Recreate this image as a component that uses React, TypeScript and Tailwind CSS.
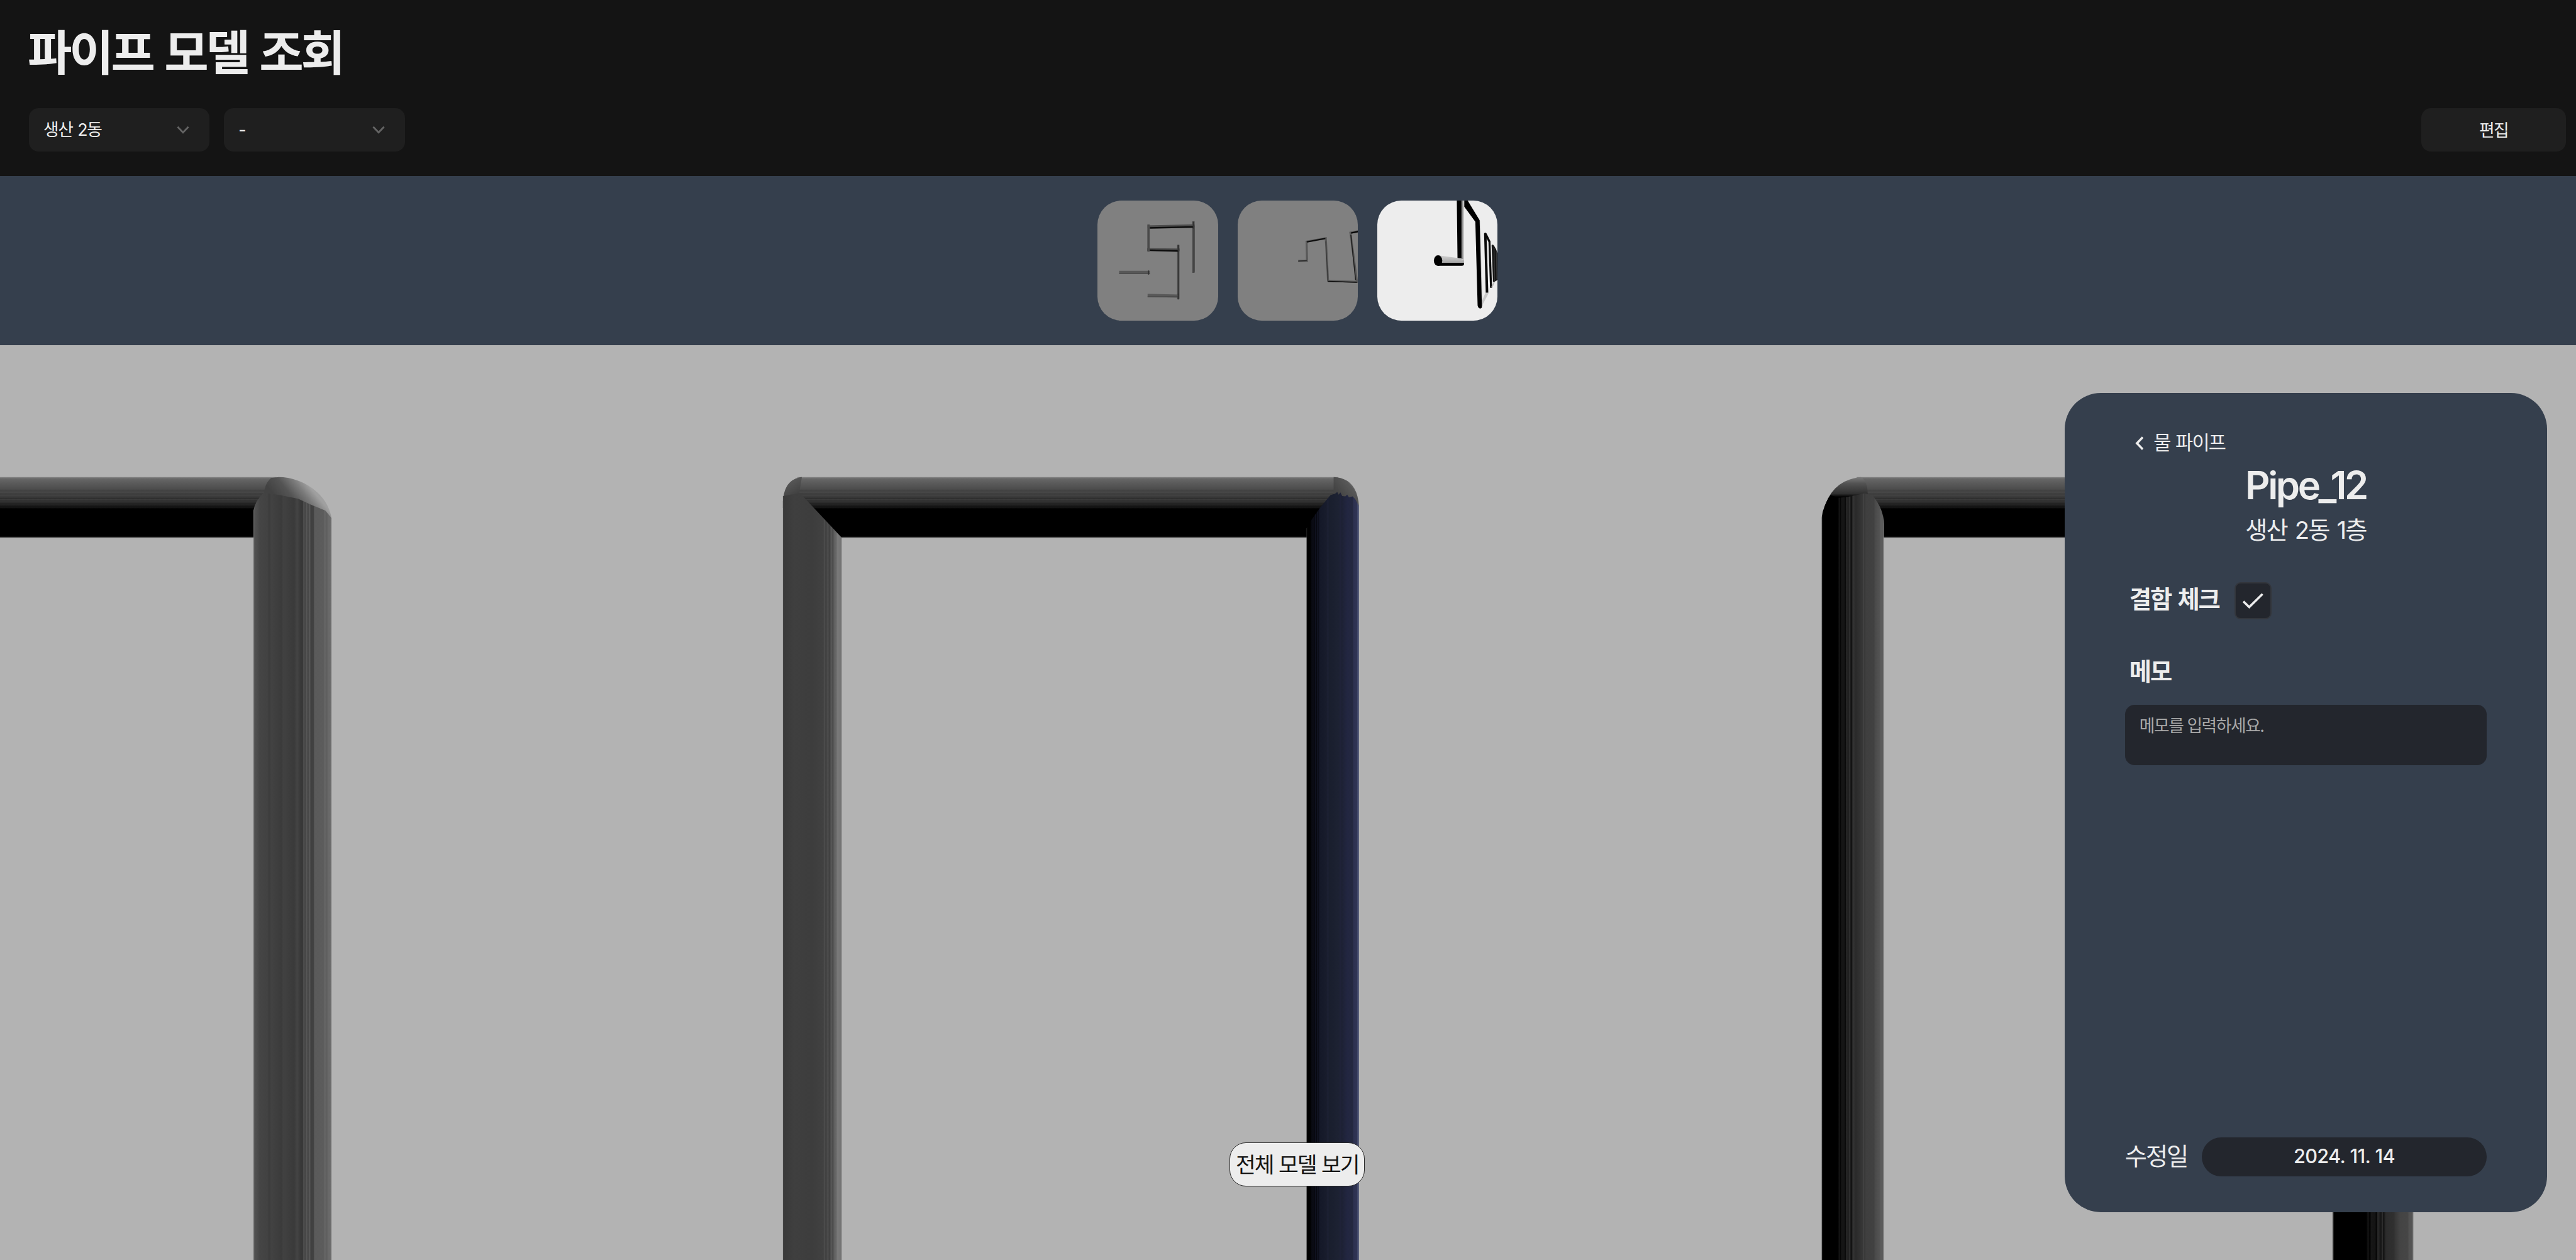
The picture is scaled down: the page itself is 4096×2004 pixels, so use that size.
import React from "react";

function ChevronDown() {
  return (
    <svg viewBox="0 0 28 18" className="h-[13px] w-[20px] shrink-0" fill="none" stroke="#646464" strokeWidth="4">
      <path d="M2 2.5 14 15 26 2.5" />
    </svg>
  );
}

function Select({ label }: { label: string }) {
  return (
    <div className="flex h-[69px] w-[287.3px] items-center justify-between rounded-[15.3px] bg-[#1f1f1f] pr-[32px] pl-[23px]">
      <span className="relative -top-px text-[26.8px] leading-[40px] font-normal tracking-[-0.05em] [word-spacing:0.05em] whitespace-nowrap text-[#ededed]">{label}</span>
      <ChevronDown />
    </div>
  );
}

function Header() {
  return (
    <header className="h-[280px] shrink-0 bg-[#141414] pt-[38px] pr-[16px] pl-[46px]">
      <h1 className="-ml-[2px] h-[92px] text-[76.6px] leading-[92px] font-bold tracking-[-0.055em] [word-spacing:0.06em] whitespace-nowrap text-[#ededed]">파이프 모델 조회</h1>
      <div className="mt-[42.4px] flex items-center justify-between">
        <div className="flex gap-[23px]">
          <Select label="생산 2동" />
          <Select label="-" />
        </div>
        <button className="flex h-[69px] w-[229.9px] items-center justify-center rounded-[15.3px] bg-[#1f1f1f] text-[26.8px] leading-[40px] font-normal tracking-[-0.055em] text-[#ededed]">
          편집
        </button>
      </div>
    </header>
  );
}

function ThumbA() {
  return (
    <svg viewBox="0 0 266.7 266.7" className="size-full" fill="none">
      <path d="M113 53V113M212.5 46V160M179 98V218" stroke="#4a4a4a" strokeWidth="5" />
      <path d="M214 55V158M180 112V214" stroke="#2b2b2b" strokeWidth="1.6" />
      <path d="M111 58 215 55.5M110 108.5 182 109" stroke="#4c4c4c" strokeWidth="6" />
      <path d="M116 60.5 212 58.5M116 110 179 111.5" stroke="#0c0c0c" strokeWidth="3.6" />
      <path d="M48 159H116M111 210 181 211.5" stroke="#585858" strokeWidth="7" />
      <path d="M48 161.5H116M111 213H181" stroke="#404040" strokeWidth="1.6" />
      <path d="M113 155V164M179 206V219M212.5 47V62M179 98V114" stroke="#333" strokeWidth="3" />
    </svg>
  );
}

function ThumbB() {
  return (
    <svg viewBox="0 0 266.7 266.7" className="size-full" fill="none">
      <path d="M134 133.5H153.500L152.500 91 195 83.5 200 177.500 264 180 249.500 71 270 67.500" stroke="#585858" strokeWidth="4.5" />
      <path d="M134 134 153 133" stroke="#2c2c2c" strokeWidth="2" />
      <path d="M153 91.5 194 84" stroke="#0c0c0c" strokeWidth="2.8" />
      <path d="M195 90 199.5 177" stroke="#333" strokeWidth="1.4" />
      <path d="M200 178.8 264 181" stroke="#0c0c0c" strokeWidth="2" />
      <path d="M250.5 76 261 176" stroke="#1c1c1c" strokeWidth="2" />
      <path d="M251 71.8 270 68" stroke="#050505" strokeWidth="3" />
    </svg>
  );
}

function ThumbC() {
  return (
    <svg viewBox="0 0 266.7 266.7" className="size-full">
      <defs>
        <linearGradient id="stub" x1="0" y1="0" x2="0" y2="1">
          <stop offset="0" stopColor="#d4d4d4" />
          <stop offset="0.7" stopColor="#a6a6a6" />
          <stop offset="0.74" stopColor="#000" />
          <stop offset="1" stopColor="#000" />
        </linearGradient>
        <linearGradient id="post" x1="0" y1="0" x2="1" y2="0">
          <stop offset="0" stopColor="#000" />
          <stop offset="0.58" stopColor="#000" />
          <stop offset="0.68" stopColor="#707070" />
          <stop offset="1" stopColor="#d8d8d8" />
        </linearGradient>
      </defs>
      <path d="M134 121 177 127 192 131V140Q192 144.5 187 144.5H134Z" fill="url(#stub)" />
      <path d="M176 0H192V131Q185 127 177.5 127Z" fill="url(#post)" />
      <ellipse cx="134.5" cy="133" rx="9.3" ry="11.8" fill="#000" />
      <path d="M229 238 230.5 225 239.5 204 246.5 205Z" fill="#c9c9c9" />
      <path d="M226 44 231.5 234" stroke="#bdbdbd" strokeWidth="3" />
      <path d="M192.5 0H200L226.5 43.5 231.5 236Q231 239 228 239 223 238 222 232L217 47 192.5 13.5Z" fill="#000" />
      <path d="M236.3 73Q239 69 242 73L250.5 90 254 193H249.5L246 92 242 84 245.7 204H240Z" fill="#0a0a0a" />
      <path d="M253 99Q256 95 259 101L263 108 267 120V174L264 177 259 180H256Z" fill="#161616" />
      <path d="M258.5 104 260 178M263.5 112 264.5 174" stroke="#555" strokeWidth="0.8" />
      <path d="M252 192 257 181 260 181 255 192Z" fill="#bbb" />
    </svg>
  );
}

function Thumb({ active, children }: { active?: boolean; children: React.ReactNode }) {
  return (
    <div className={`size-[191.6px] overflow-hidden rounded-[38.3px] ${active ? "bg-[#ededed]" : "bg-[#808080]"}`}>{children}</div>
  );
}

const Stops = ({ list }: { list: [number, string][] }) => (
  <>
    {list.map(([o, c], i) => (
      <stop key={i} offset={o} stopColor={c} />
    ))}
  </>
);

const H: [number, string][] = [
  [0, "#868686"], [0.03, "#666666"], [0.12, "#585858"], [0.2, "#4c4c4c"], [0.23, "#404040"], [0.25, "#494949"], [0.28, "#3b3b3b"],
  [0.3, "#424242"], [0.34, "#363636"], [0.35, "#2c2c2c"], [0.37, "#3c3c3c"], [0.38, "#323232"], [0.42, "#303030"], [0.43, "#1e1e1e"], [0.45, "#2d2d2d"],
  [0.46, "#151515"], [0.48, "#222222"], [0.49, "#0c0c0c"], [0.51, "#161616"], [0.52, "#000000"], [0.984, "#000000"], [0.986, "#303030"], [1, "#303030"],
];
const V1: [number, string][] = [
  [0, "#777777"], [0.015, "#525252"], [0.06, "#4a4a4a"], [0.08, "#454545"], [0.18, "#424242"], [0.2, "#3c3c3c"], [0.23, "#424242"], [0.36, "#3b3b3b"],
  [0.38, "#414141"], [0.52, "#3a3a3a"], [0.56, "#444444"], [0.6, "#393939"], [0.63, "#363636"], [0.64, "#4c4c4c"], [0.67, "#454545"], [0.68, "#575757"], [0.7, "#444444"],
  [0.72, "#5a5a5a"], [0.735, "#3f3f3f"], [0.77, "#424242"], [0.78, "#5a5a5a"], [0.9, "#5c5c5c"], [0.91, "#676767"], [0.94, "#5e5e5e"], [0.955, "#696969"], [0.985, "#6a6a6a"], [1, "#8a8a8a"],
];
const V2: [number, string][] = [
  [0, "#4a4a4a"], [0.02, "#3a3a3a"], [0.2, "#3f3f3f"], [0.5, "#3d3d3d"], [0.69, "#414141"], [0.71, "#4f4f4f"], [0.73, "#3d3d3d"], [0.76, "#4d4d4d"], [0.8, "#3f3f3f"],
  [0.82, "#5a5a5a"], [0.85, "#494949"], [0.87, "#5e5e5e"], [0.91, "#6a6a6a"], [0.93, "#7a7a7a"], [1, "#727272"],
];
const V3: [number, string][] = [
  [0, "#333333"], [0.015, "#000000"], [0.07, "#000000"], [0.09, "#07080f"], [0.13, "#0b0c16"], [0.15, "#04050a"], [0.17, "#101222"], [0.19, "#05060c"], [0.21, "#121525"],
  [0.23, "#0b0d18"], [0.25, "#141828"], [0.38, "#181c2c"], [0.41, "#1d2135"], [0.43, "#191e2d"], [0.62, "#1d2233"], [0.65, "#1f2238"], [0.67, "#1d2134"], [0.78, "#222641"], [0.88, "#24283f"],
  [0.9, "#2d3150"], [0.96, "#303453"], [0.97, "#414868"], [1, "#4a5070"],
];
const V4: [number, string][] = [
  [0, "#777777"], [0.015, "#000000"], [0.27, "#000000"], [0.28, "#1c1c1c"], [0.3, "#020202"], [0.32, "#151515"], [0.37, "#151515"], [0.38, "#000000"], [0.4, "#2a2a2a"],
  [0.43, "#1c1c1c"], [0.45, "#333333"], [0.47, "#141414"], [0.49, "#141414"], [0.5, "#353535"], [0.55, "#2a2a2a"], [0.6, "#303030"], [0.66, "#373737"], [0.67, "#464646"], [0.69, "#373737"], [0.71, "#3f3f3f"],
  [0.84, "#414141"], [0.86, "#4a4a4a"], [0.93, "#535353"], [0.95, "#5c5c5c"], [0.98, "#5c5c5c"], [1, "#888888"],
];
const V5: [number, string][] = [
  [0, "#666666"], [0.02, "#000000"], [0.42, "#000000"], [0.44, "#161616"], [0.46, "#000000"], [0.48, "#161616"], [0.53, "#141414"], [0.54, "#000000"], [0.56, "#2a2a2a"], [0.6, "#141414"],
  [0.62, "#2e2e2e"], [0.63, "#101010"], [0.66, "#2c2c2c"], [0.76, "#303030"], [0.78, "#383838"], [0.84, "#444444"], [0.93, "#464646"], [0.95, "#525252"], [0.98, "#545454"], [1, "#777777"],
];

/** Perspective view of the pipe run shown in the 3D canvas. */
function PipeScene() {
  return (
    <svg viewBox="0 764 5702 2026" preserveAspectRatio="none" className="absolute inset-0 size-full">
      <defs>
        <linearGradient id="h" gradientUnits="userSpaceOnUse" x1="0" y1="1056" x2="0" y2="1190"><Stops list={H} /></linearGradient>
        <linearGradient id="v1" gradientUnits="userSpaceOnUse" x1="561" y1="0" x2="734" y2="0"><Stops list={V1} /></linearGradient>
        <linearGradient id="v2" gradientUnits="userSpaceOnUse" x1="1733" y1="0" x2="1863" y2="0"><Stops list={V2} /></linearGradient>
        <linearGradient id="v3" gradientUnits="userSpaceOnUse" x1="2892" y1="0" x2="3008" y2="0"><Stops list={V3} /></linearGradient>
        <linearGradient id="v4" gradientUnits="userSpaceOnUse" x1="4032" y1="0" x2="4170" y2="0"><Stops list={V4} /></linearGradient>
        <linearGradient id="v5" gradientUnits="userSpaceOnUse" x1="5163" y1="0" x2="5342" y2="0"><Stops list={V5} /></linearGradient>
        <linearGradient id="c1" gradientUnits="userSpaceOnUse" x1="612" y1="1102" x2="668" y2="1056">
          <stop offset="0" stopColor="#424242" /><stop offset="0.4" stopColor="#545454" /><stop offset="0.75" stopColor="#7c7c7c" /><stop offset="1.0" stopColor="#a0a0a0" />
        </linearGradient>
        <linearGradient id="c2" gradientUnits="userSpaceOnUse" x1="1765" y1="1095" x2="1745" y2="1060">
          <stop offset="0" stopColor="#404040" /><stop offset="0.8" stopColor="#565656" /><stop offset="1" stopColor="#707070" />
        </linearGradient>
        <linearGradient id="c3" gradientUnits="userSpaceOnUse" x1="2964" y1="1094" x2="2998" y2="1066">
          <stop offset="0" stopColor="#444444" /><stop offset="0.7" stopColor="#585858" /><stop offset="1" stopColor="#8c8c8c" />
        </linearGradient>
        <linearGradient id="c4" gradientUnits="userSpaceOnUse" x1="0" y1="1056" x2="0" y2="1105">
          <stop offset="0" stopColor="#7c7c7c" /><stop offset="0.3" stopColor="#525252" /><stop offset="0.75" stopColor="#303030" /><stop offset="0.9" stopColor="#000000" />
        </linearGradient>
      </defs>

      <path d="M0 1056H612V1190H0Z" fill="url(#h)" />
      <path d="M584 1094Q586 1070 600 1058L617 1056C668 1056 726 1092 734 1148L700 1140 640 1110Z" fill="url(#c1)" />
      <path d="M561 2790V1130Q565 1108 584 1091L620 1096 660 1104 690 1118 720 1130 734 1147V2790Z" fill="url(#v1)" />

      <path d="M1765 1056H2962V1190H1765Z" fill="url(#h)" />
      <path d="M1733 1110Q1736 1060 1775 1056L1768 1098 1733 1125Z" fill="url(#c2)" />
      <path d="M1733 2790V1098L1768 1092 1777 1098 1863 1190V2790Z" fill="url(#v2)" />
      <path d="M2952 1056Q3004 1058 3008 1120L2952 1112Z" fill="url(#c3)" />
      <path d="M2892 2790V1170L2902 1152 2922 1124 2945 1096 2955 1093 2960 1089 2963 1095 2967 1090 2971 1098 2978 1099 2982 1095 2986 1101 2994 1099 3000 1105 3008 1120V2790Z" fill="url(#v3)" />

      <path d="M4110 1056H4600V1190H4110Z" fill="url(#h)" />
      <path d="M4033 1150Q4044 1064 4119 1056Q4136 1066 4134 1100L4090 1112 4034 1140Z" fill="url(#c4)" />
      <path d="M4032 2790V1146Q4036 1118 4052 1096L4070 1102 4090 1100 4128 1092 4146 1098Q4170 1128 4170 1160V2790Z" fill="url(#v4)" />

      <path d="M5163 2600H5342V2790H5163Z" fill="url(#v5)" />
    </svg>
  );
}

function DetailPanel() {
  return (
    <aside className="absolute top-[76.2px] right-[46px] flex h-[1303px] w-[767.2px] flex-col rounded-[57.5px] bg-[#353f4d] px-[96px] pt-[58px] pb-[57.4px] text-[#ededed]">
      <button className="flex h-[44px] items-center gap-[16px] pl-[16px]">
        <svg viewBox="0 0 19 31" className="h-[22px] w-[13.5px] shrink-0" fill="none" stroke="#ededed" strokeWidth="5">
          <path d="M17 2 4 15.5 17 29" />
        </svg>
        <span className="relative -top-px text-[30.6px] leading-[44px] tracking-[-0.055em] [word-spacing:0.04em] whitespace-nowrap">물 파이프</span>
      </button>
      <h2 className="mt-[15.5px] h-[60px] text-center text-[61.3px] leading-[60px] font-semibold tracking-[-0.055em]">Pipe_12</h2>
      <p className="mt-[16.5px] h-[48px] text-center text-[38.3px] leading-[48px] tracking-[-0.05em] [word-spacing:0.08em] whitespace-nowrap">생산 2동 1층</p>
      <div className="mt-[59px] flex h-[59.2px] items-center gap-[24px] pl-[7px]">
        <span className="relative -top-[3px] text-[38.3px] leading-[48px] font-bold tracking-[-0.055em] [word-spacing:0.09em] whitespace-nowrap">결함 체크</span>
        <span className="flex size-[59.2px] items-center justify-center rounded-[10px] border-2 border-[#33363c] bg-[#23262d]">
          <svg viewBox="0 0 46 34" className="h-[25px] w-[33px]" fill="none" stroke="#ededed" strokeWidth="5">
            <path d="M1.5 18.5 14.5 31 44 2" />
          </svg>
        </span>
      </div>
      <span className="mt-[59.2px] h-[48px] pl-[7px] text-[38.3px] leading-[48px] font-bold tracking-[-0.055em]">메모</span>
      <div className="mt-[28.3px] h-[96px] rounded-[15.3px] bg-[#23262d] pt-[13px] pl-[23px] text-[26.8px] leading-[40px] tracking-[-0.055em] text-[#a9a9a9]">
        메모를 입력하세요.
      </div>
      <div className="mt-auto flex h-[61.8px] items-center justify-between">
        <span className="relative -top-px text-[38.3px] leading-[48px] font-normal tracking-[-0.055em] whitespace-nowrap">수정일</span>
        <span className="flex h-[61.8px] w-[453px] items-center justify-center rounded-full bg-[#23262d] pb-[2px] text-[30.6px] leading-[40px] font-medium tracking-[-0.02em]">
          2024. 11. 14
        </span>
      </div>
    </aside>
  );
}

export default function App() {
  return (
    <div lang="ko" className="flex h-[2004px] w-[4096px] flex-col overflow-hidden bg-[#b3b3b3] font-['Inter','Noto_Sans_CJK_KR',sans-serif]">
      <Header />
      <nav className="flex h-[268.8px] shrink-0 items-center justify-center gap-[30.65px] bg-[#353f4d] pl-[30.65px]">
        <Thumb><ThumbA /></Thumb>
        <Thumb><ThumbB /></Thumb>
        <Thumb active><ThumbC /></Thumb>
      </nav>
      <main className="relative flex-1">
        <PipeScene />
        <DetailPanel />
        <button className="absolute bottom-[116.6px] left-[1955.3px] flex h-[70px] w-[214.8px] items-center justify-center rounded-[26px] border-[1.5px] border-[#2a2a2a] bg-[#ededed] pt-[2px] text-[34.5px] leading-[48px] tracking-[-0.06em] [word-spacing:0.03em] whitespace-nowrap text-[#141414]">
          전체 모델 보기
        </button>
      </main>
    </div>
  );
}
